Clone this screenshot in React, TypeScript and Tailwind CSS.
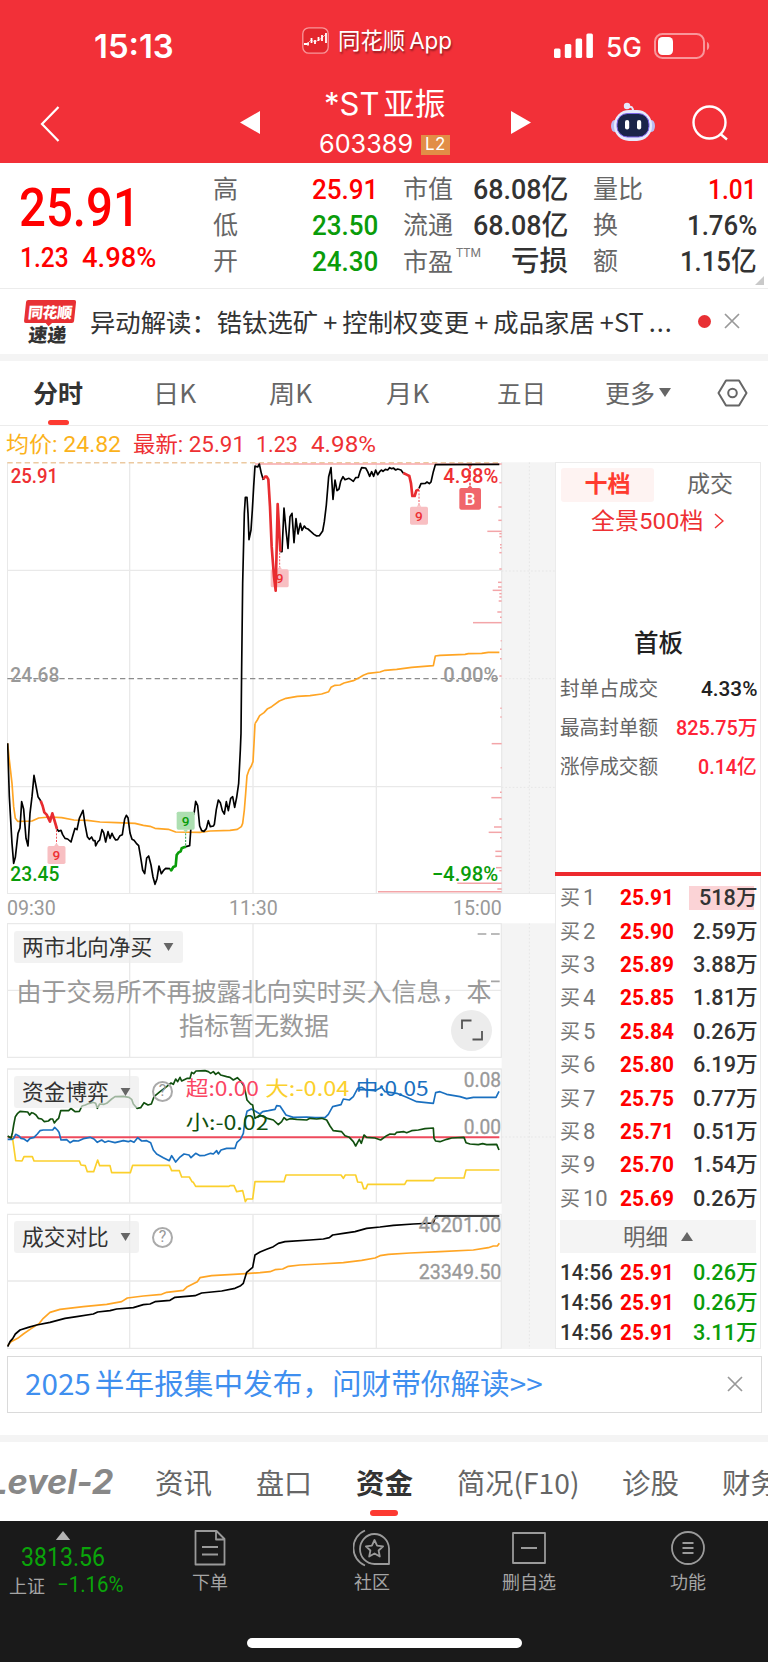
import { ReactNode, useLayoutEffect, useRef, useState } from 'react';
import clsx from 'clsx';

const NUM = "font-['Roboto','Noto_Sans_CJK_SC',sans-serif]";

const BIDS = [
    ['1', '25.91', '518万'],
    ['2', '25.90', '2.59万'],
    ['3', '25.89', '3.88万'],
    ['4', '25.85', '1.81万'],
    ['5', '25.84', '0.26万'],
    ['6', '25.80', '6.19万'],
    ['7', '25.75', '0.77万'],
    ['8', '25.71', '0.51万'],
    ['9', '25.70', '1.54万'],
    ['10', '25.69', '0.26万'],
];

const TRADES = [
    ['14:56', '25.91', '0.26万'],
    ['14:56', '25.91', '0.26万'],
    ['14:56', '25.91', '3.11万'],
];

// [y, start x] of every volume-at-price bar, all of them end at the right border
const VOLUME_BARS = [
    [98, 838], [171, 835], [211, 835], [244, 802], [251, 838], [260, 838], [284, 840], [293, 840], [308, 838], [357, 838],
    [397, 834], [411, 834], [421, 818], [431, 838], [441, 838], [453, 836], [486, 832], [502, 840], [518, 759], [572, 842],
    [598, 840], [626, 840], [678, 838], [775, 841], [801, 841], [881, 815], [953, 842], [1027, 840], [1043, 814], [1107, 838],
    [1131, 822], [1147, 806], [1163, 840], [1204, 826], [1219, 826], [1253, 828], [1262, 838], [1300, 712], [1317, 832], [1325, 474],
];

/* Condenses or widens one line of text to the width of its box */
const Fit = ({ children, className }: { children: ReactNode; className?: string }) => {
    const box = useRef<HTMLSpanElement>(null);
    const text = useRef<HTMLSpanElement>(null);
    const [scale, setScale] = useState(1);

    useLayoutEffect(() => {
        if (box.current && text.current) {
            setScale(box.current.clientWidth / text.current.offsetWidth);
        }
    }, [children]);

    return (
        <span ref={box} className={clsx('block shrink-0 leading-none', className)}>
            <span ref={text} className="inline-block origin-left whitespace-nowrap" style={{ transform: `scaleX(${scale})` }}>
                {children}
            </span>
        </span>
    );
};

const CloseIcon = ({ className }: { className?: string }) => (
    <svg viewBox="0 0 16 16" className={clsx('h-4 w-4 shrink-0', className)} fill="none" stroke="#999" strokeWidth="1.7">
        <path d="M1 1l14 14M15 1L1 15" />
    </svg>
);

const Header = () => (
    <header className="h-[163px] bg-[#f23038] text-white">
        <div className="flex h-[84px] items-start">
            <Fit className="mt-[31px] ml-[94px] w-[80px] font-['Inter'] text-[32px] font-semibold">15:13</Fit>
            <svg viewBox="0 0 27 27" className="mt-[27px] ml-[128px] h-[27px] w-[27px]" fill="none">
                <rect x="0.8" y="0.8" width="25.4" height="25.4" rx="6" fill="#e3262d" stroke="#f9979a" strokeWidth="1.3" />
                <path d="M2 17h3M6 18.500v-3M9.500 16v-5M13 17v-4M16.500 14v-4M20 14V8M24 16V6" stroke="#fff" strokeWidth="1.8" />
                <path d="M4 18l5-5 4 2 7-4 4-4" stroke="#fff" strokeWidth="0.6" />
            </svg>
            <Fit className="mt-[30px] ml-[9px] w-[114px] font-['Inter','Noto_Sans_CJK_SC',sans-serif] text-[23px] text-shadow-[1px_2px_2px_rgb(0_0_0/0.4)]">
                同花顺<span className="ml-1">App</span>
            </Fit>
            <svg viewBox="0 0 40 26" className="mt-[33px] ml-[102px] h-[26px] w-[40px]" fill="#fff">
                <rect x="0" y="15.500" width="6.500" height="9.500" rx="1.500" />
                <rect x="10.800" y="11" width="6.500" height="14" rx="1.500" />
                <rect x="21.600" y="5.500" width="6.500" height="19.500" rx="1.500" />
                <rect x="32.400" y="0.500" width="6.500" height="24.500" rx="1.500" />
            </svg>
            <Fit className="mt-[34px] ml-[12px] w-[36px] font-['Inter'] text-[27px] font-medium">5G</Fit>
            <svg viewBox="0 0 58 26" className="mt-[33px] ml-[12px] h-[26px] w-[58px]" fill="none">
                <rect x="1" y="1" width="49" height="24" rx="7.500" stroke="#f9969a" strokeWidth="2" />
                <rect x="4" y="4" width="15" height="18" rx="4.500" fill="#fff" />
                <path d="M53 9c3 1 3 7 0 8z" fill="#f9969a" />
            </svg>
        </div>
        <div className="flex h-[79px] items-start">
            <svg viewBox="0 0 20 36" className="mt-[22px] ml-[40px] h-[36px] w-[20px]" fill="none" stroke="#fff" strokeWidth="2.2">
                <path d="M18.500 1L2 18l16.500 17" />
            </svg>
            <svg viewBox="0 0 20 23" className="mt-[27px] ml-[180px] h-[23px] w-[20px]" fill="#fff">
                <path d="M20 0v23L0 11.500z" />
            </svg>
            <div className="ml-[59px] w-[135px] font-['Inter','Noto_Sans_CJK_SC',sans-serif]">
                <Fit className="mt-[4px] ml-[5px] w-[121px] text-[31px]">
                    *ST<span className="ml-1">亚振</span>
                </Fit>
                <div className="mt-[13px] flex items-center">
                    <Fit className="w-[94px] text-[25px]">603389</Fit>
                    <span className="ml-[8px] flex h-[20px] w-[29px] items-center justify-center bg-[#e28d47] text-[17px] leading-none tracking-wide">L2</span>
                </div>
            </div>
            <svg viewBox="0 0 20 23" className="mt-[27px] ml-[57px] h-[23px] w-[20px]" fill="#fff">
                <path d="M0 0v23l20-11.500z" />
            </svg>
            <svg viewBox="0 0 44 40" className="mt-[18px] ml-[80px] h-[40px] w-[44px]" fill="none">
                <path d="M22 10c0-5-1-6-6-5" stroke="#e5e8fb" strokeWidth="2" />
                <circle cx="16" cy="4" r="3.200" fill="#e5e8fb" />
                <ellipse cx="3.500" cy="24" rx="3.500" ry="6" fill="#b9bdf2" />
                <ellipse cx="40.500" cy="24" rx="3.500" ry="6" fill="#b9bdf2" />
                <rect x="3" y="8" width="38" height="31" rx="15" fill="#e6e9fc" />
                <rect x="6" y="11.500" width="32" height="23.500" rx="10.500" fill="#1b2449" stroke="#7d62e8" strokeWidth="1" />
                <rect x="14" y="18" width="4.200" height="9.500" rx="2.100" fill="#fff" />
                <rect x="26" y="18" width="4.200" height="9.500" rx="2.100" fill="#fff" />
            </svg>
            <svg viewBox="0 0 38 38" className="mt-[20px] ml-[36px] h-[38px] w-[38px]" fill="none" stroke="#fff" strokeWidth="2.400">
                <circle cx="18.500" cy="18.500" r="16" />
                <path d="M29.500 30l6.500 5.500" />
            </svg>
        </div>
    </header>
);

const Quote = () => (
    <section className={clsx('relative flex h-[126px] border-b border-[#ececec] text-[#333]', NUM)}>
        <div className="w-[213px] pt-[18px] pl-[19px] text-[#ff0000]">
            <Fit className="w-[121px] text-[54px] font-medium">25.91</Fit>
            <div className="mt-[10px] flex">
                <Fit className="ml-px w-[49px] text-[27px] font-medium">1.23</Fit>
                <Fit className="ml-[13px] w-[74px] text-[27px] font-medium">4.98%</Fit>
            </div>
        </div>
        <div className="flex w-[165px] flex-col gap-[8px] pt-[13px]">
            {[
                ['高', '25.91', 'text-[#ff0000]'],
                ['低', '23.50', 'text-[#0a9c0a]'],
                ['开', '24.30', 'text-[#0a9c0a]'],
            ].map(([label, value, color]) => (
                <div key={label} className="flex justify-between leading-none">
                    <span className="text-[25px] leading-[28px] text-[#666]">{label}</span>
                    <Fit className={clsx('w-[66px] text-[28px] font-medium', color)}>{value}</Fit>
                </div>
            ))}
        </div>
        <div className="ml-[25px] flex w-[165px] flex-col gap-[8px] pt-[13px]">
            <div className="flex justify-between">
                <Fit className="mt-px w-[50px] text-[25px] leading-[28px] text-[#666]">市值</Fit>
                <Fit className="w-[95px] text-[28px] font-medium">68.08亿</Fit>
            </div>
            <div className="flex justify-between">
                <Fit className="mt-px w-[50px] text-[25px] leading-[28px] text-[#666]">流通</Fit>
                <Fit className="w-[95px] text-[28px] font-medium">68.08亿</Fit>
            </div>
            <div className="flex">
                <Fit className="mt-[2px] w-[50px] text-[25px] leading-[28px] text-[#666]">市盈</Fit>
                <Fit className="-mt-[2px] ml-[3px] w-[25px] text-[13px] text-[#777]">TTM</Fit>
                <Fit className="ml-auto w-[57px] text-[28px] font-medium">亏损</Fit>
            </div>
        </div>
        <div className="ml-[25px] flex w-[164px] flex-col gap-[8px] pt-[13px]">
            <div className="flex justify-between">
                <Fit className="mt-px w-[50px] text-[25px] leading-[28px] text-[#666]">量比</Fit>
                <Fit className="w-[49px] text-[28px] font-medium text-[#ff0000]">1.01</Fit>
            </div>
            <div className="flex justify-between">
                <span className="text-[25px] leading-[28px] text-[#666]">换</span>
                <Fit className="w-[70px] text-[28px] font-medium">1.76%</Fit>
            </div>
            <div className="flex justify-between">
                <span className="text-[25px] leading-[28px] text-[#666]">额</span>
                <Fit className="w-[77px] text-[28px] font-medium">1.15亿</Fit>
            </div>
        </div>
        <svg viewBox="0 0 9 9" className="absolute right-[4px] bottom-[3px] h-[9px] w-[9px]" fill="#c9c9c9">
            <path d="M9 0v9H0z" />
        </svg>
    </section>
);

const News = () => (
    <section className="flex h-[72px] items-center border-b-[7px] border-[#f4f4f4] pl-[23px] font-['Noto_Sans_CJK_SC',sans-serif]">
        <div className="flex w-[52px] -skew-x-6 flex-col items-center">
            <span className="relative flex h-[23px] w-[50px] items-center justify-center rounded-[2px] bg-[#e83034] text-[15px] leading-none font-black tracking-tight text-white">
                <span className="-mt-px">同花顺</span>
                <span className="absolute -bottom-[2px] left-[22px] h-[6px] w-[6px] rotate-45 bg-[#e83034]" />
            </span>
            <span className="mt-[2px] text-[19px] leading-[18px] font-black text-[#333]">速递</span>
        </div>
        <Fit className="ml-[15px] w-[583px] text-[25px] text-[#333]">
            异动解读：锆钛选矿<span className="mx-[5px]">+</span>控制权变更<span className="mx-[5px]">+</span>成品家居<span className="ml-[5px]">+ST</span>
            <span className="ml-[5px] tracking-[1px]">...</span>
        </Fit>
        <span className="ml-[25px] h-[13px] w-[13px] rounded-full bg-[#e83034]" />
        <CloseIcon className="ml-[13px]" />
    </section>
);

const PeriodTabs = () => (
    <nav className="relative flex h-[65px] items-center border-b border-[#ececec] font-['Noto_Sans_CJK_SC',sans-serif] text-[25px] text-[#666]">
        <Fit className="ml-[33px] w-[50px] font-bold text-[#333]">分时</Fit>
        <Fit className="ml-[70px] w-[43px]">日K</Fit>
        <Fit className="ml-[73px] w-[43px]">周K</Fit>
        <Fit className="ml-[74px] w-[43px]">月K</Fit>
        <Fit className="ml-[68px] w-[49px]">五日</Fit>
        <Fit className="ml-[59px] w-[50px]">更多</Fit>
        <svg viewBox="0 0 12 9" className="ml-[4px] h-[9px] w-[12px]" fill="#666">
            <path d="M0 0h12L6 9z" />
        </svg>
        <svg viewBox="0 0 31 28" className="ml-[46px] h-[28px] w-[31px]" fill="none" stroke="#666" strokeWidth="2">
            <path d="M9 1.500h13L29.500 14 22 26.500H9L1.500 14z" strokeLinejoin="round" />
            <circle cx="15.500" cy="14" r="4.300" />
        </svg>
        <span className="absolute bottom-0 left-[48px] h-[5px] w-[21px] rounded-full bg-[#fd3a31]" />
    </nav>
);

const Marker = ({ x, y, from, up }: { x: number; y: number; from: number; up?: boolean }) => (
    <g>
        <path d={`M${x} ${from}V${up ? y + 27 : y - 27}`} stroke={up ? '#2b9e45' : '#f0545c'} strokeWidth="3" strokeDasharray="6 4" />
        <path d={up ? `M${x - 7} ${y + 27}h14l-7 9z` : `M${x - 7} ${y - 27}h14l-7 -9z`} fill={up ? '#addfb1' : '#f8bfc2'} />
        <rect x={x - 27} y={y - 27} width="54" height="54" rx="5" fill={up ? '#addfb1' : '#f8bfc2'} />
        <text x={x} y={y + 15} textAnchor="middle" fontSize="41" fontWeight="500" fill={up ? '#0a9c0a' : '#ee3033'}>
            9
        </text>
    </g>
);

const PriceChart = () => (
    <svg viewBox="21 36 1644 1296" className="h-[432px] w-[548px] font-['Roboto']" fill="none" strokeLinejoin="round">
        <rect x="1505" y="37" width="160" height="1296" fill="#f4f4f4" />
        <path d="M22 361H1505M22 1010H1505M389 37V1332M759 37V1332M1129 37V1332M1505 37V1332M22 37V1332M22 1331H1665" stroke="#e9e9e9" strokeWidth="4" />
        <path d="M1505 363H1665M1505 686H1665M1505 1012H1665M1588 37V1332" stroke="#e6e6e6" strokeWidth="3" strokeDasharray="5 6" />
        <path d="M22 38H1502" stroke="#ecc9a0" strokeWidth="5" strokeDasharray="16 10" />
        <path d="M765 42H1505" stroke="#f7a7aa" strokeWidth="5" />
        {VOLUME_BARS.map(([y, x]) => (
            <path key={y} d={`M${x + 660} ${y}H1505`} stroke="#f3a5a8" strokeWidth="4.500" />
        ))}
        <path d="M22 686H1498" stroke="#8c8c8c" strokeWidth="3.500" strokeDasharray="16 10" />

        <g fontSize="59.5" fontWeight="500">
            <text x="32" y="100" textLength="142" lengthAdjust="spacingAndGlyphs" fill="#ee3033">25.91</text>
            <text x="31" y="696" textLength="147" lengthAdjust="spacingAndGlyphs" fill="#999">24.68</text>
            <text x="31" y="1294" textLength="147" lengthAdjust="spacingAndGlyphs" fill="#0a9c0a">23.45</text>
            <text x="1330" y="99" textLength="165" lengthAdjust="spacingAndGlyphs" fill="#ee3033">4.98%</text>
            <text x="1330" y="696" textLength="165" lengthAdjust="spacingAndGlyphs" fill="#999">0.00%</text>
            <text x="1295" y="1294" textLength="200" lengthAdjust="spacingAndGlyphs" fill="#0a9c0a">−4.98%</text>
        </g>

        <path d="M1410 50V112" stroke="#ee3033" strokeWidth="4" strokeDasharray="7 5" />
        <path d="M1400 42h20l-10 12zM1400 117h20l-10 -12z" fill="#f0666b" />
        <rect x="1378" y="114" width="65" height="65" rx="6" fill="#f0666b" />
        <text x="1410" y="166" textAnchor="middle" fontSize="52" fontWeight="500" fill="#fff">B</text>

        {/* morning session */}
        <path
            d="M23 880L28 930L36 1000L41 1070L46 1105L53 1114L96 1113L116 1104L150 1101L185 1103L222 1110L262 1111L300 1116L350 1118L405 1120L430 1126L450 1129L465 1135L505 1138L527 1146L600 1147L630 1143L690 1141L712 1138L724 1130L728 1120L733 1080L737 1030L741 977L747 960L754 948L759 935L762 880L765 821"
            stroke="#ffa524"
            strokeWidth="5"
        />
        <g stroke="#000" strokeWidth="5">
            <path d="M23 880L28 1040L36 1180L41 1240L46 1222L54 1150L60 1134L65 1055L71 1078L78 1165L84 1188L90 1090L96 1040L102 976L108 1008L114 1040L122 1052" />
            <path d="M171 1137L176 1144L183 1141L188 1154L195 1165L203 1167L213 1176L219 1155L225 1135L231 1139L238 1105L244 1092L249 1081L255 1123L262 1160L268 1168L275 1161L280 1172L285 1172L287 1188L293 1176L299 1170L306 1139L311 1148L317 1176L324 1145L330 1165L336 1150L341 1161L347 1170L353 1169L360 1157L367 1154L374 1107L379 1096L384 1103L390 1149L396 1168L402 1171L409 1180L416 1187L422 1222L428 1260L434 1271L440 1224L446 1218L453 1245L459 1281L465 1303L471 1286L477 1248L484 1271L490 1262L497 1255L510 1256" />
            <path d="M558 1190L569 1187L575 1100L582 1092L587 1054L593 1067L599 1128L605 1142L612 1144L619 1136L625 1112L631 1130L640 1128L643 1123L649 1078L655 1050L661 1058L667 1082L673 1092L679 1055L685 1082L692 1045L698 1040L704 1072L710 1042L716 1000L721 900L723 850L725 650L728 400L733 190L736 142L741 142L744 190L747 269L753 240L757 180L761 110L765 48L773 51L778 42L784 70L790 90" />
        </g>
        <path d="M122 1052L128 1068L133 1087L140 1094L150 1115L157 1090L163 1110L171 1137" stroke="#e82c30" strokeWidth="8" />
        <path d="M510 1256L514 1261L520 1251L527 1248L530 1215L535 1208L542 1204L545 1195L552 1192L558 1190" stroke="#0a9c0a" strokeWidth="8" />
        <Marker x={169.5} y={1215} from={1140} />
        <Marker x={557} y={1112} from={1186} up />

        {/* afternoon session */}
        <Marker x={839} y={385} from={308} />
        <Marker x={1257} y={197} from={120} />
        <g transform="translate(660 0)" strokeWidth="5">
            <path
                d="M105 821L112 810L119 797L132 788L143 776L155 770L178 753L198 745L232 739L270 737L305 732L326 725L333 712L345 706L360 705L372 699L400 692L420 682L430 676L445 670L480 666L495 661L530 658L575 652L640 647L646 618L660 616L735 613L745 611L785 610L805 607L838 607"
                stroke="#ffa524"
            />
            <path
                d="M181 305L186 305L192 174L198 240L204 295L210 200L216 190L222 278L228 206L234 252L241 220L246 241L253 228L258 235L264 237L272 244L282 253L290 258L298 257L308 243L313 215L319 165L326 80L333 53L339 148L345 90L351 122L357 117L362 94L369 80L375 89L387 85L393 89L400 94L407 83L415 82L420 65L425 53L437 54L443 65L449 79L455 65L461 79L467 60L473 74L480 64L484 60L489 64L496 58L503 60L509 53L515 56L520 54L527 60L533 57L543 60L550 70M597 115L603 101L616 100L621 96L628 101L633 96L640 65L646 44L838 43"
                stroke="#000"
            />
            <path d="M130 88L135 80L140 80L145 88L150 170L155 290L162 380L167 422L173 162L178 250L181 305M550 69L560 74L568 78L573 100L577 138L584 138L589 122L597 118" stroke="#e82c30" strokeWidth="8" />
        </g>
    </svg>
);

const IndicatorPill = ({ label, className }: { label: string; className: string }) => (
    <div className={clsx('absolute left-[7px] flex h-[32px] items-center rounded-[3px] bg-[#ebebeb]/65 pl-[8px] text-[#333]', className)}>
        <span className="-mt-[2px] text-[21.7px] leading-none">{label}</span>
        <svg viewBox="0 0 11 9" className="ml-[11px] h-[8px] w-[11px]" fill="#666">
            <path d="M0 0h11L5.500 9z" />
        </svg>
    </div>
);

const HelpIcon = ({ className }: { className: string }) => (
    <span className={clsx("absolute left-[145px] flex h-[21px] w-[21px] items-center justify-center rounded-full border-2 border-[#aaa] font-['Roboto'] text-[16px] leading-none text-[#999]", className)}>
        ?
    </span>
);

const IndicatorCharts = () => (
    <div className="relative h-[426px] w-[548px] font-['Noto_Sans_CJK_SC',sans-serif]">
        <svg viewBox="21 69 1644 1278" className="h-[426px] w-[548px] font-['Roboto','Noto_Sans_CJK_SC',sans-serif]" fill="none" strokeLinejoin="round">
            <rect x="1505" y="70" width="160" height="1277" fill="#f4f4f4" />
            <g stroke="#e9e9e9" strokeWidth="4">
                <path d="M22 71H1504V472H22ZM22 271H1504M389 71V472M759 71V472M1129 71V472" />
                <path d="M22 507H1504V909H22ZM389 507V909M759 507V909M1129 507V909" />
                <path d="M22 943H1504V1345H22ZM22 1143H1504M389 943V1345M759 943V1345M1129 943V1345" />
            </g>
            <path d="M1588 70V1347M1505 711H1665" stroke="#e6e6e6" strokeWidth="3" strokeDasharray="5 6" />
            <path d="M1433 102h26M1473 102h26M1433 244h26M1473 244h26" stroke="#a5a5a5" strokeWidth="5" />

            <path d="M23 712H1498" stroke="#ee4a5c" strokeWidth="6" />
            <path
                d="M37 710L41 738L47 782L66 783L72 770L97 770L102 783L238 783L243 795L256 797L262 815L281 815L287 797L293 780L299 797L330 797L335 818L391 818L398 796L508 796L515 812L538 812L545 831L568 831L576 845L580 847L587 859L687 859L690 857L702 857L710 875L728 872L736 905L741 897L758 897L765 845L852 845L858 825L1023 825L1030 835L1036 825L1067 825L1073 846L1085 847L1091 866L1098 866L1103 853L1214 853L1220 842L1300 842L1306 834L1392 834L1398 810L1498 810"
                stroke="#fbd02c"
                strokeWidth="5"
            />
            <path
                d="M23 718L36 718L41 715L47 703L57 708L63 715L72 717L82 724L90 715L102 712L112 702L120 692L130 690L158 690L164 682L172 690L177 697L183 720L200 719L210 728L220 722L235 723L250 716L270 712L282 717L292 727L305 720L315 727L325 723L345 728L370 722L385 725L392 722L402 727L413 713L425 723L440 722L452 728L460 750L470 762L490 773L508 782L515 767L527 786L538 773L552 762L567 765L573 773L587 760L600 767L615 766L632 760L640 762L650 752L655 762L663 750L680 745L705 745L711 727L722 717L730 700L735 660L741 634L754 627L765 633L780 642L788 635L805 632L825 628L830 617L840 618L848 630L858 645L880 652L920 651L945 653L975 653L985 643L998 620L1023 614L1030 597L1048 600L1060 590L1073 565L1085 562L1098 570L1125 572L1145 562L1155 575L1190 580L1220 592L1250 605L1300 610L1307 578L1320 575L1340 583L1380 590L1400 596L1420 592L1488 592L1497 574"
                stroke="#1a70c0"
                strokeWidth="5"
            />
            <path
                d="M23 708L33 714L37 700L41 675L46 650L53 640L60 634L83 636L89 645L95 638L101 640L108 645L115 655L125 657L133 665L145 663L152 657L158 657L163 669L170 660L176 655L182 632L206 632L213 625L219 630L225 635L238 634L246 618L256 615L268 610L278 607L287 610L292 625L299 612L312 613L320 610L335 597L345 590L370 589L387 592L395 598L400 612L411 625L422 623L432 608L444 615L454 612L462 590L480 575L500 560L513 549L520 553L527 537L533 545L540 532L545 543L562 535L570 535L575 517L581 521L588 513L615 512L625 515L632 520L640 515L647 523L655 517L662 525L680 530L690 532L700 540L712 533L722 543L733 560L741 600L752 612L758 615L762 640L765 655L780 645L790 650L802 655L820 660L835 674L845 665L852 653L860 660L870 656L890 658L920 660L930 655L950 657L965 655L980 660L990 678L1000 692L1025 695L1035 707L1048 712L1060 725L1067 738L1073 727L1078 718L1084 730L1092 705L1100 712L1125 714L1142 720L1160 707L1170 702L1185 703L1190 697L1212 695L1220 698L1235 692L1255 690L1275 686L1300 684L1302 715L1307 723L1320 725L1340 718L1355 714L1392 712L1398 728L1410 732L1435 734L1448 731L1460 734L1490 733L1497 750"
                stroke="#11500f"
                strokeWidth="5"
            />

            <path
                d="M23 1337L33 1325L53 1315L70 1302L90 1288L118 1270L130 1255L150 1237L180 1228L250 1220L320 1213L365 1205L382 1194L430 1188L485 1183L500 1177L550 1171L562 1160L592 1145L600 1133L635 1127L700 1123L738 1121L780 1118L810 1115L825 1109L848 1107L865 1099L900 1095L960 1092L1030 1088L1085 1081L1125 1074L1140 1067L1165 1063L1230 1059L1320 1055L1420 1050L1465 1043L1480 1038L1492 1038L1498 1030"
                stroke="#ffa524"
                strokeWidth="5"
            />
            <path
                d="M23 1340L30 1325L38 1316L46 1302L60 1290L85 1282L110 1275L150 1267L195 1255L230 1250L280 1242L293 1236L330 1232L350 1227L400 1223L430 1214L450 1212L465 1205L510 1201L525 1192L585 1187L605 1179L665 1173L705 1165L722 1157L730 1150L740 1117L758 1102L765 1065L780 1056L800 1048L820 1040L835 1030L855 1025L930 1020L970 1017L988 1013L998 1005L1030 1000L1065 995L1100 985L1140 981L1180 976L1240 972L1300 969L1307 948L1498 948"
                stroke="#000"
                strokeWidth="5"
            />

            <g fontSize="60.5" fill="#999" stroke="#999" strokeWidth="1">
                <text x="1391" y="560" textLength="112" lengthAdjust="spacingAndGlyphs">0.08</text>
                <text x="1391" y="702" textLength="112" lengthAdjust="spacingAndGlyphs">0.00</text>
                <text x="1256" y="996" textLength="248" lengthAdjust="spacingAndGlyphs">46201.00</text>
                <text x="1256" y="1138" textLength="248" lengthAdjust="spacingAndGlyphs">23349.50</text>
            </g>
            <g fontSize="60" className="font-['Noto_Sans_CJK_SC',sans-serif]">
                <text x="557" y="589" textLength="220" lengthAdjust="spacingAndGlyphs" fill="#fa4664">超:0.00</text>
                <text x="796" y="589" textLength="252" lengthAdjust="spacingAndGlyphs" fill="#fbd02c">大:-0.04</text>
                <text x="1067" y="589" textLength="219" lengthAdjust="spacingAndGlyphs" fill="#1a70c0">中:0.05</text>
                <text x="557" y="691" textLength="249" lengthAdjust="spacingAndGlyphs" fill="#11500f">小:-0.02</text>
            </g>
        </svg>
        <IndicatorPill label="两市北向净买" className="top-[8px] w-[169px]" />
        <div className="absolute top-[50px] left-[6px] w-[482px] text-center text-[25px] leading-[34px] text-[#999]">
            由于交易所不再披露北向实时买入信息，本指标暂无数据
        </div>
        <button className="absolute top-[87px] left-[444px] flex h-[41px] w-[41px] items-center justify-center rounded-full bg-[#ececec]">
            <svg viewBox="0 0 22 22" className="h-[22px] w-[22px]" fill="none" stroke="#555" strokeWidth="1.800">
                <path d="M1 10V1.500h9.500M21 12v8.500h-9.500" />
            </svg>
        </button>
        <IndicatorPill label="资金博弈" className="top-[153px] w-[125px]" />
        <HelpIcon className="top-[158px]" />
        <IndicatorPill label="成交对比" className="top-[298px] w-[125px]" />
        <HelpIcon className="top-[304px]" />
    </div>
);

const OrderBook = () => (
    <aside className={clsx('h-[887px] w-[206px] border border-[#ebebeb] pr-[3px] pl-[4px] text-[#333]', NUM)}>
        <div className="mt-[5px] ml-px flex h-[34px] items-center text-[23px] leading-none">
            <span className="flex h-full w-[93px] items-center justify-center rounded-[3px] bg-[#fef3f2] font-bold text-[#ff3b2f]">十档</span>
            <span className="ml-[33px] text-[#666]">成交</span>
        </div>
        <div className="mt-[8px] flex items-center pl-[31px] text-[#ee3033]">
            <Fit className="w-[112px] text-[22.5px]">全景500档</Fit>
            <svg viewBox="0 0 10 16" className="ml-[11px] h-[16px] w-[10px]" fill="none" stroke="#ee3033" strokeWidth="1.500">
                <path d="M1 1l8 7-8 7" />
            </svg>
        </div>
        <div className="mt-[100px] text-center text-[24.500px] leading-none font-medium text-[#222]">首板</div>
        <div className="mt-[22px] flex flex-col gap-[19px] text-[20px]">
            <div className="flex justify-between">
                <Fit className="w-[98px] text-[#666]">封单占成交</Fit>
                <Fit className="w-[56px] font-medium text-[#222]">4.33%</Fit>
            </div>
            <div className="flex justify-between">
                <Fit className="w-[98px] text-[#666]">最高封单额</Fit>
                <Fit className="w-[81px] font-medium text-[#ff2338]">825.75万</Fit>
            </div>
            <div className="flex justify-between">
                <Fit className="w-[98px] text-[#666]">涨停成交额</Fit>
                <Fit className="w-[59px] font-medium text-[#ff2338]">0.14亿</Fit>
            </div>
        </div>
        <div className="-mr-[4px] -ml-[5px] mt-[95px] h-[4px] bg-[#ed2a2e]" />
        <div className="mt-[6px]">
            {BIDS.map(([level, price, volume], index) => (
                <div key={level} className="flex h-[33.4px] items-center text-[22px]">
                    <span className="flex w-[60px] items-center gap-[3px] leading-none text-[#777]">
                        <span className="text-[20px]">买</span>
                        {level}
                    </span>
                    <Fit className="w-[54px] font-bold text-[#ff0000]">{price}</Fit>
                    <span className={clsx('ml-[15px] flex h-[24px] w-[65px] items-center', index === 0 && 'bg-[#fbd3d6]')}>
                        <Fit className={clsx('font-medium', index === 0 ? 'ml-[10px] w-[59px]' : 'ml-[4px] w-[65px]')}>{volume}</Fit>
                    </span>
                </div>
            ))}
        </div>
        <div className="mt-[5px] flex h-[33px] w-[196px] items-center justify-center bg-[#f4f4f4] text-[22.5px] leading-none text-[#666]">
            明细
            <svg viewBox="0 0 12 9" className="ml-[13px] h-[9px] w-[12px]" fill="#666">
                <path d="M0 9h12L6 0z" />
            </svg>
        </div>
        <div className="mt-[4px]">
            {TRADES.map(([time, price, volume], index) => (
                <div key={index} className="flex h-[30.4px] items-center text-[22px]">
                    <Fit className="w-[53px] font-medium">{time}</Fit>
                    <Fit className="ml-[7px] w-[54px] font-bold text-[#ff0000]">{price}</Fit>
                    <Fit className="ml-[19px] w-[65px] font-medium text-[#0a9c0a]">{volume}</Fit>
                </div>
            ))}
        </div>
    </aside>
);

const SectionTabs = () => (
    <nav className="relative flex h-[79px] items-center overflow-hidden font-['Noto_Sans_CJK_SC',sans-serif] text-[28px] text-[#666]">
        <Fit className="-ml-[12px] w-[125px] font-['Inter'] text-[34px] font-bold text-[#888] italic">Level-2</Fit>
        <Fit className="ml-[42px] w-[57px]">资讯</Fit>
        <Fit className="ml-[44px] w-[56px]">盘口</Fit>
        <Fit className="ml-[44px] w-[57px] font-bold text-[#333]">资金</Fit>
        <Fit className="ml-[44px] w-[122px]">简况(F10)</Fit>
        <Fit className="ml-[43px] w-[57px]">诊股</Fit>
        <Fit className="ml-[43px] w-[57px]">财务</Fit>
        <span className="absolute bottom-[5px] left-[370px] h-[6px] w-[28px] rounded-full bg-[#fd3a31]" />
    </nav>
);

const NavItem = ({ label, className, children }: { label: string; className: string; children: ReactNode }) => (
    <div className={clsx('flex shrink-0 flex-col items-center', className)}>
        <svg viewBox="0 0 38 38" className="h-[38px] w-[38px]" fill="none" stroke="#9a9a9a" strokeWidth="1.800" strokeLinejoin="round">
            {children}
        </svg>
        <span className="mt-[5px] text-[18px] leading-none whitespace-nowrap">{label}</span>
    </div>
);

const BottomBar = () => (
    <footer className="relative flex h-[141px] items-start bg-[#1a1a1a] font-['Noto_Sans_CJK_SC',sans-serif] text-[#a5a5a5]">
        <div className="flex w-[130px] flex-col items-start pt-[10px]">
            <svg viewBox="0 0 16 10" className="ml-[55px] h-[9px] w-[16px]" fill="#b3b3b3">
                <path d="M0 10h16L8 0z" />
            </svg>
            <Fit className="mt-[5px] ml-[21px] w-[84px] font-['Roboto'] text-[25px] text-[#0aa50a]">3813.56</Fit>
            <div className="mt-[4px] ml-[9px] flex items-center">
                <Fit className="w-[36px] text-[18px]">上证</Fit>
                <Fit className="ml-[12px] w-[67px] font-['Roboto'] text-[22px] text-[#0aa50a]">−1.16%</Fit>
            </div>
        </div>
        <NavItem label="下单" className="mt-[8px] ml-[51px] w-[58px]">
            <path d="M4.500 2h21l8 8v25.500h-29zM25 2v8.500h8.500M11 18h16M11 25.500h16" />
        </NavItem>
        <NavItem label="社区" className="mt-[8px] ml-[104px] w-[58px]">
            <path d="M36 35V19.500A14.500 15 0 1 0 21.500 35zM12 1.500a19 19 0 0 0 0 35" />
            <path d="M21.500 11l2.600 5.600 6 .7-4.500 4.200 1.200 6-5.300-3-5.300 3 1.200-6-4.500-4.200 6-.7z" />
        </NavItem>
        <NavItem label="删自选" className="mt-[8px] ml-[99px] w-[58px]">
            <path d="M3 4h32v30H3zM11 19h16" />
        </NavItem>
        <NavItem label="功能" className="mt-[8px] ml-[101px] w-[58px]">
            <circle cx="19" cy="19" r="16" />
            <path d="M13.500 14h11M13.500 19h11M13.500 24h11" />
        </NavItem>
        <span className="absolute bottom-[14px] left-[247px] h-[10px] w-[275px] rounded-full bg-white" />
    </footer>
);

export default function App() {
    return (
        <div className="flex h-[1662px] w-[768px] flex-col overflow-hidden bg-white">
            <Header />
            <Quote />
            <News />
            <PeriodTabs />
            <div className="flex h-[36px] items-center pt-[3px] pl-[6px] font-['Roboto','Noto_Sans_CJK_SC',sans-serif] text-[22px] text-[#ee3033]">
                <Fit className="w-[115px] text-[#fbb21b]">均价: 24.82</Fit>
                <Fit className="ml-[12px] w-[112px]">最新: 25.91</Fit>
                <Fit className="ml-[11px] w-[42px]">1.23</Fit>
                <Fit className="ml-[13px] w-[65px]">4.98%</Fit>
            </div>
            <main className="flex h-[887px] pl-[7px]">
                <div className="w-[548px]">
                    <PriceChart />
                    <div className="flex h-[29px] items-center pr-[53px] font-['Roboto'] text-[20px] text-[#999]">
                        <Fit className="w-[49px]">09:30</Fit>
                        <Fit className="ml-[173px] w-[49px]">11:30</Fit>
                        <Fit className="ml-auto w-[49px]">15:00</Fit>
                    </div>
                    <IndicatorCharts />
                </div>
                <OrderBook />
            </main>
            <div className="mx-[7px] mt-[7px] flex h-[58px] w-[755px] items-center justify-between border border-[#dadada] pr-[18px] pl-[17px]">
                <Fit className="-mt-[3px] w-[518px] font-['Noto_Sans_CJK_SC',sans-serif] text-[29px] text-[#3f8fef]">
                    2025<span className="ml-1">半年报集中发布，问财带你解读&gt;&gt;</span>
                </Fit>
                <CloseIcon />
            </div>
            <div className="mt-[22px] h-[7px] shrink-0 bg-[#f4f4f4]" />
            <SectionTabs />
            <BottomBar />
        </div>
    );
}
